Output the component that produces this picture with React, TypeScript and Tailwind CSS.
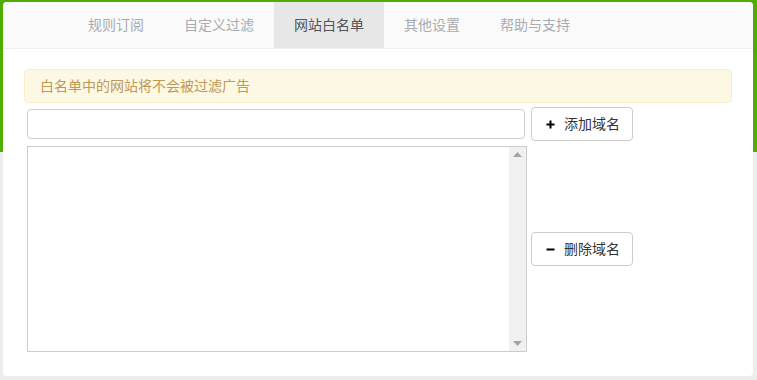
import { useState } from "react"

const tabs = ["规则订阅", "自定义过滤", "网站白名单", "其他设置", "帮助与支持"]

function PlusGlyph() {
  return (
    <svg width="9" height="9" viewBox="0 0 9 9" className="shrink-0">
      <path d="M4.5 0.5v8M0.5 4.5h8" stroke="#000" strokeWidth="2" />
    </svg>
  )
}

function MinusGlyph() {
  return (
    <svg width="9" height="9" viewBox="0 0 9 9" className="shrink-0">
      <path d="M0.5 4.5h8" stroke="#000" strokeWidth="2" />
    </svg>
  )
}

function FakeScrollbar() {
  return (
    <div className="flex w-[17px] shrink-0 flex-col items-center justify-between bg-[#f0f0f0] py-[5px]">
      <svg width="9" height="5" viewBox="0 0 9 5">
        <path d="M0 5L4.5 0L9 5Z" fill="#a3a3a3" />
      </svg>
      <svg width="9" height="5" viewBox="0 0 9 5">
        <path d="M0 0L4.5 5L9 0Z" fill="#a3a3a3" />
      </svg>
    </div>
  )
}

export default function App() {
  const [active, setActive] = useState(2)
  const [domain, setDomain] = useState("")

  return (
    <div
      className="min-h-[380px] w-[757px] bg-[linear-gradient(to_bottom,#4fad00_152px,#ebeeeb_152px)] pb-[4px] pl-[3px] pr-[4px] pt-[2px] text-[14px]"
      style={{ fontFamily: '"Liberation Sans", "Noto Sans CJK SC", sans-serif' }}
    >
      <div className="h-[374px] overflow-hidden rounded-[4px] bg-white">
        {/* tabs */}
        <nav className="flex h-[47px] border-b border-[#eeeeee] bg-[#fafafa] pl-[65px]">
          {tabs.map((t, i) => (
            <button
              key={t}
              onClick={() => setActive(i)}
              className={
                i === active
                  ? "flex items-center bg-[#e7e7e7] px-5 text-[#555555]"
                  : "flex items-center px-5 text-[#a8acb0]"
              }
            >
              {t}
            </button>
          ))}
        </nav>

        <div className="pl-[21px] pr-[21px] pt-[20px]">
          <div className="flex h-[34px] items-center rounded-[4px] border border-[#faebcc] bg-[#fcf8e3] pl-[15px] text-[#c09853]">
            白名单中的网站将不会被过滤广告
          </div>

          <div className="ml-[3px] mt-[4px] flex items-center gap-[6px]">
            <input
              value={domain}
              onChange={(e) => setDomain(e.target.value)}
              className="h-[30px] w-[498px] rounded-[4px] border border-[#cccccc] px-2 outline-none"
            />
            <button className="flex h-[34px] w-[102px] items-center justify-center gap-[9px] rounded-[4px] border border-[#cccccc] bg-white pl-[2px] text-[#333333]">
              <PlusGlyph />
              添加域名
            </button>
          </div>

          <div className="ml-[3px] mt-[5px] flex items-center gap-[4px]">
            <div className="flex h-[206px] w-[500px] border border-[#cccccc]">
              <div className="flex-1" />
              <FakeScrollbar />
            </div>
            <button className="flex h-[34px] w-[102px] items-center justify-center gap-[9px] rounded-[4px] border border-[#cccccc] bg-white pl-[2px] text-[#333333]">
              <MinusGlyph />
              删除域名
            </button>
          </div>
        </div>
      </div>
    </div>
  )
}
